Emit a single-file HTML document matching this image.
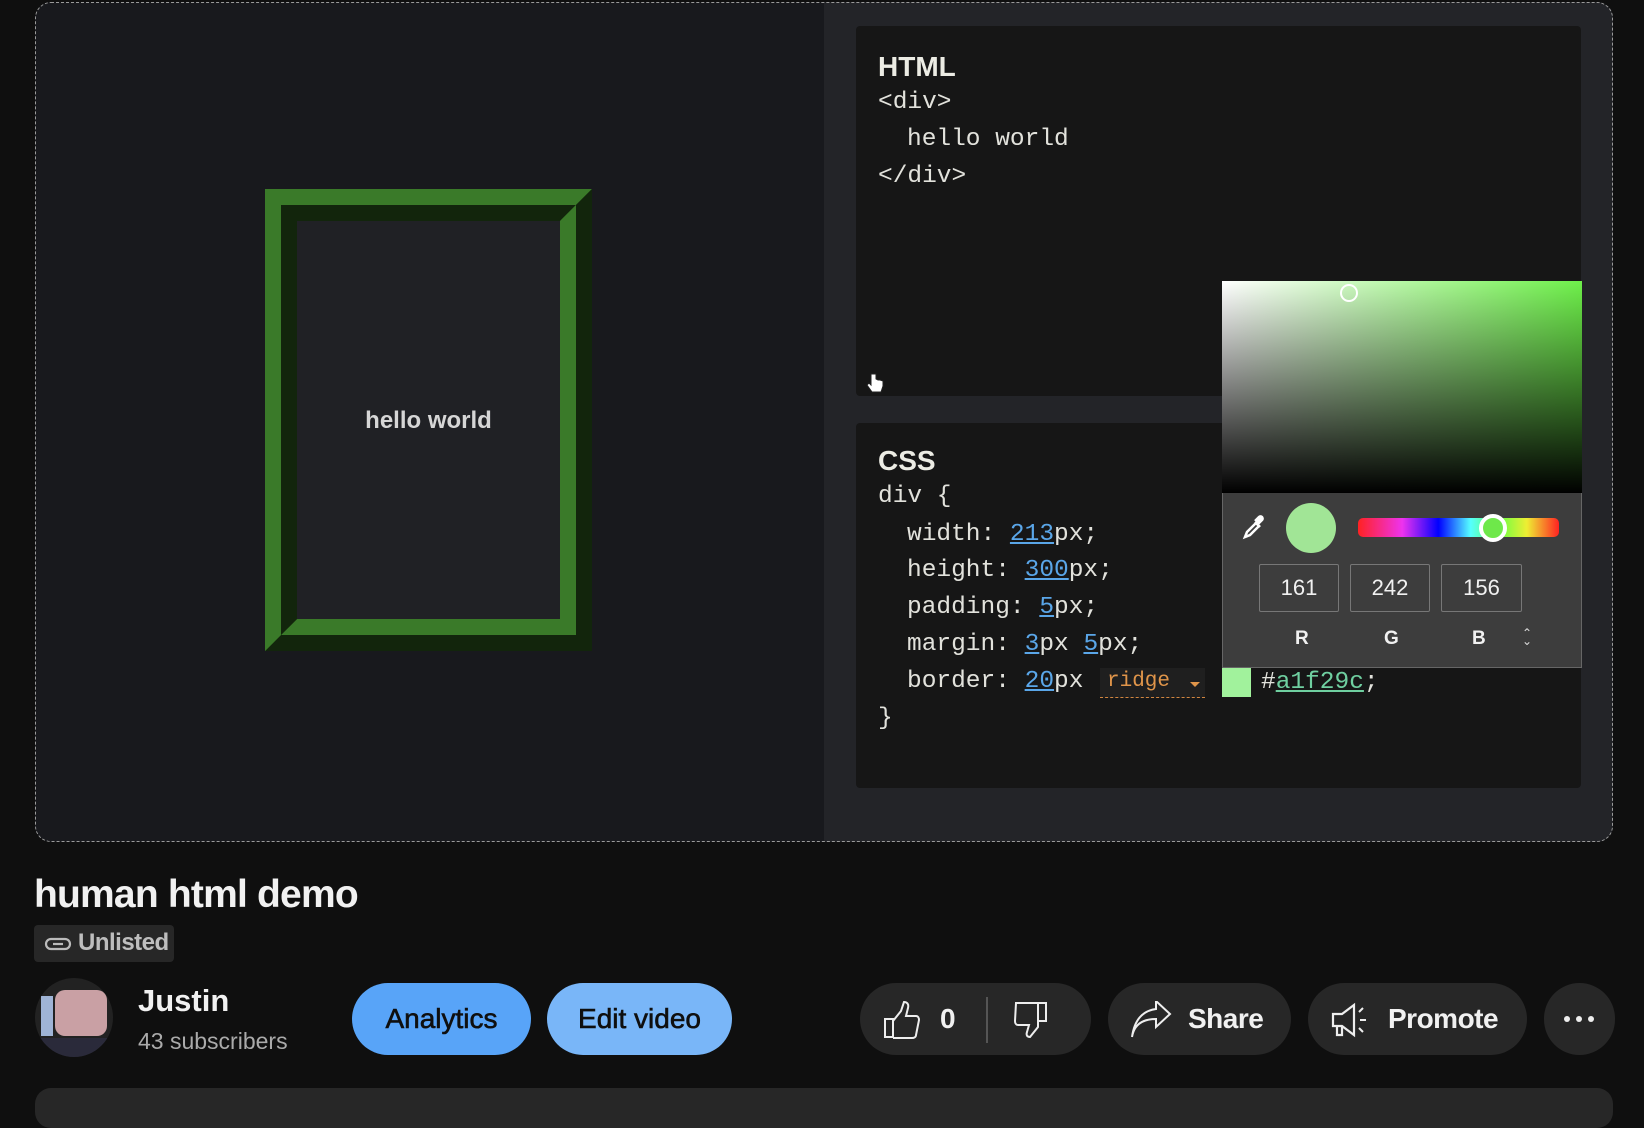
<!DOCTYPE html>
<html><head><meta charset="utf-8"><style>
*{margin:0;padding:0;box-sizing:border-box}
body{width:1644px;height:1096px;background:#0f0f0f;position:relative;overflow:hidden;font-family:"Liberation Sans",sans-serif;color:#f1f1f1}
.abs{position:absolute}
.mono{font-family:"Liberation Mono",monospace;font-size:24.5px;color:#e2e2dc;white-space:pre;position:absolute}
.n{color:#5aa6e8;text-decoration:underline}
.btn{position:absolute;top:983px;height:72px;border-radius:36px;background:#272727;display:flex;align-items:center;font-size:28px;font-weight:bold;color:#f1f1f1}
</style></head><body>
<div class="abs" style="left:35px;top:2px;width:1578px;height:840px;border-radius:16px;overflow:hidden;background:#18191d">
  <div class="abs" style="left:789px;top:0;width:789px;height:840px;background:#232428"></div>
  <div class="abs" style="left:821px;top:24px;width:725px;height:370px;background:#161616;border-radius:4px"></div>
  <div class="abs" style="left:821px;top:421px;width:725px;height:365px;background:#161616;border-radius:4px"></div>
</div>
<div class="abs" style="left:35px;top:2px;width:1578px;height:840px;border:1px dashed #9a9a9a;border-radius:16px"></div>
<div class="abs" style="left:265px;top:189px;width:327px;height:462px;border:32px ridge #3a7a29;background:#202125"></div>
<div class="abs" style="left:265px;top:407px;width:327px;text-align:center;font-size:24px;font-weight:bold;color:#d6d6d6">hello world</div>
<div class="abs" style="left:878px;top:51px;font-size:28px;font-weight:bold;color:#ecece4">HTML</div>
<div class="mono" style="left:878px;top:89px">&lt;div&gt;</div>
<div class="mono" style="left:907px;top:126px">hello world</div>
<div class="mono" style="left:878px;top:163px">&lt;/div&gt;</div>
<svg class="abs" style="left:866px;top:372px" width="18" height="22" viewBox="0 0 18 22"><path d="M5 2v11l-2-2-2 2 5 7h9l2-6v-5l-3-1-2 0-2-1V2z" fill="#fff" stroke="#222" stroke-width="1"/></svg>
<div class="abs" style="left:878px;top:445px;font-size:28px;font-weight:bold;color:#ecece4">CSS</div>
<div class="mono" style="left:878px;top:483px">div {</div>
<div class="mono" style="left:907px;top:521px">width: <span class="n">213</span>px;</div>
<div class="mono" style="left:907px;top:557px">height: <span class="n">300</span>px;</div>
<div class="mono" style="left:907px;top:594px">padding: <span class="n">5</span>px;</div>
<div class="mono" style="left:907px;top:631px">margin: <span class="n">3</span>px <span class="n">5</span>px;</div>
<div class="mono" style="left:907px;top:668px">border: <span class="n">20</span>px</div>
<div class="abs" style="left:1100px;top:668px;width:105px;height:30px;background:#1f1f1f;border-bottom:1px dashed #d0853f"></div>
<div class="mono" style="left:1107px;top:670px;font-size:21px;color:#e0954a">ridge</div>
<div class="abs" style="left:1190px;top:682px;border-left:5px solid transparent;border-right:5px solid transparent;border-top:5px solid #e0954a"></div>
<div class="abs" style="left:1222px;top:668px;width:29px;height:29px;background:#a1f29c"></div>
<div class="mono" style="left:1261px;top:669px;color:#e2e2dc">#<span style="color:#6fcfa0;text-decoration:underline">a1f29c</span>;</div>
<div class="mono" style="left:878px;top:705px">}</div>
<div class="abs" style="left:1222px;top:281px;width:360px;height:387px;background:#3d3d3d;border:1px solid #666"></div>
<div class="abs" style="left:1222px;top:281px;width:360px;height:212px;background:linear-gradient(to top,#000,rgba(0,0,0,0)),linear-gradient(to right,#fff,#6ef04a)"></div>
<div class="abs" style="left:1340px;top:284px;width:18px;height:18px;border:2px solid #fff;border-radius:50%"></div>
<svg class="abs" style="left:1241px;top:515px" width="26" height="26" viewBox="0 0 26 26"><path d="M4 22l2-5 9-9 3 3-9 9z" fill="none" stroke="#fff" stroke-width="2.5"/><path d="M14 7l5 5M17 9l4-4a2 2 0 0 0-3-3l-4 4" fill="#fff" stroke="#fff" stroke-width="2.5"/></svg>
<div class="abs" style="left:1286px;top:503px;width:50px;height:50px;border-radius:50%;background:#a1e596"></div>
<div class="abs" style="left:1358px;top:518px;width:201px;height:19px;border-radius:5px;background:linear-gradient(to right,#f22,#e3e 22%,#00f 40%,#5ff 56%,#6f4 70%,#ee3 84%,#f22)"></div>
<div class="abs" style="left:1479px;top:514px;width:28px;height:28px;border-radius:50%;background:#6ee84a;border:4px solid #fff"></div>
<div class="abs" style="left:1259px;top:564px;width:80px;height:48px;border:1px solid #777;border-radius:2px;text-align:center;line-height:46px;font-size:22px">161</div>
<div class="abs" style="left:1350px;top:564px;width:80px;height:48px;border:1px solid #777;border-radius:2px;text-align:center;line-height:46px;font-size:22px">242</div>
<div class="abs" style="left:1441px;top:564px;width:81px;height:48px;border:1px solid #777;border-radius:2px;text-align:center;line-height:46px;font-size:22px">156</div>
<div class="abs" style="left:1295px;top:628px;font-size:19px;font-weight:bold">R</div>
<div class="abs" style="left:1384px;top:628px;font-size:19px;font-weight:bold">G</div>
<div class="abs" style="left:1472px;top:628px;font-size:19px;font-weight:bold">B</div>
<div class="abs" style="left:1522px;top:629px;font-size:12px;color:#ddd;line-height:8px">&#8963;<br>&#8964;</div>
<div class="abs" style="left:34px;top:873px;font-size:39px;font-weight:bold;letter-spacing:-0.8px">human html demo</div>
<div class="abs" style="left:34px;top:925px;width:140px;height:37px;background:#272727;border-radius:4px"></div>
<svg class="abs" style="left:44px;top:934px" width="28" height="20" viewBox="0 0 28 20"><rect x="2" y="5" width="24" height="10" rx="5" fill="none" stroke="#bbb" stroke-width="2.2"/><path d="M9 10h10" stroke="#bbb" stroke-width="2.2"/></svg>
<div class="abs" style="left:78px;top:929px;font-size:24px;font-weight:bold;color:#bdbdbd;letter-spacing:-0.5px">Unlisted</div>
<div class="abs" style="left:35px;top:978px;width:78px;height:79px;border-radius:50%;overflow:hidden;background:#222">
 <div class="abs" style="left:6px;top:18px;width:12px;height:40px;background:#9fb4d6"></div>
 <div class="abs" style="left:20px;top:12px;width:52px;height:46px;background:#c9a0a4;border-radius:10px"></div>
 <div class="abs" style="left:0;top:60px;width:78px;height:19px;background:#2a2a3a"></div>
</div>
<div class="abs" style="left:138px;top:983px;font-size:31px;font-weight:bold">Justin</div>
<div class="abs" style="left:138px;top:1028px;font-size:23px;color:#aaa">43 subscribers</div>
<div class="btn" style="left:352px;width:179px;background:#58a4f8;color:#0f0f0f;justify-content:center;font-weight:normal;font-size:28px;-webkit-text-stroke:0.6px #0f0f0f">Analytics</div>
<div class="btn" style="left:547px;width:185px;background:#79b6f8;color:#0f0f0f;justify-content:center;font-weight:normal;font-size:28px;-webkit-text-stroke:0.6px #0f0f0f">Edit video</div>
<div class="btn" style="left:860px;width:231px">
 <svg class="abs" style="left:22px;top:18px" width="40" height="38" viewBox="0 0 40 38"><path d="M3 18h8v18H3z M11 20l8-10 3-9c3 0 5 2 4 6l-2 8h10c2 0 3 2 3 4l-3 15c0 2-2 3-4 3H11" fill="none" stroke="#eee" stroke-width="2"/></svg>
 <span class="abs" style="left:80px;top:20px">0</span>
 <div class="abs" style="left:126px;top:14px;width:2px;height:46px;background:#555"></div>
 <svg class="abs" style="left:152px;top:18px" width="38" height="38" viewBox="0 0 38 38"><path d="M4 2h22v24l-8 10c-3 0-4-2-3-5l2-7H6c-2 0-3-2-3-4z M26 2h8v18h-8" fill="none" stroke="#eee" stroke-width="2"/></svg>
</div>
<div class="btn" style="left:1108px;width:183px">
 <svg class="abs" style="left:22px;top:18px" width="42" height="38" viewBox="0 0 42 38"><path d="M2 36c2-12 10-18 24-18v8l14-13L26 0v8C10 10 4 22 2 36z" fill="none" stroke="#eee" stroke-width="2"/></svg>
 <span class="abs" style="left:80px;top:20px;letter-spacing:-0.5px">Share</span>
</div>
<div class="btn" style="left:1308px;width:219px">
 <svg class="abs" style="left:22px;top:18px" width="42" height="38" viewBox="0 0 42 38"><path d="M3 13h9l12-9v30L12 25H3z M7 25v9h5v-9" fill="none" stroke="#eee" stroke-width="2.2"/><path d="M29 11l4-4M30 19h6M29 27l4 4" stroke="#eee" stroke-width="2"/></svg>
 <span class="abs" style="left:80px;top:20px;letter-spacing:-0.5px">Promote</span>
</div>
<div class="btn" style="left:1544px;width:71px">
 <div class="abs" style="left:20px;top:33px;width:6px;height:6px;border-radius:50%;background:#eee"></div>
 <div class="abs" style="left:32px;top:33px;width:6px;height:6px;border-radius:50%;background:#eee"></div>
 <div class="abs" style="left:44px;top:33px;width:6px;height:6px;border-radius:50%;background:#eee"></div>
</div>
<div class="abs" style="left:35px;top:1088px;width:1578px;height:40px;background:#272727;border-radius:16px"></div>
</body></html>
